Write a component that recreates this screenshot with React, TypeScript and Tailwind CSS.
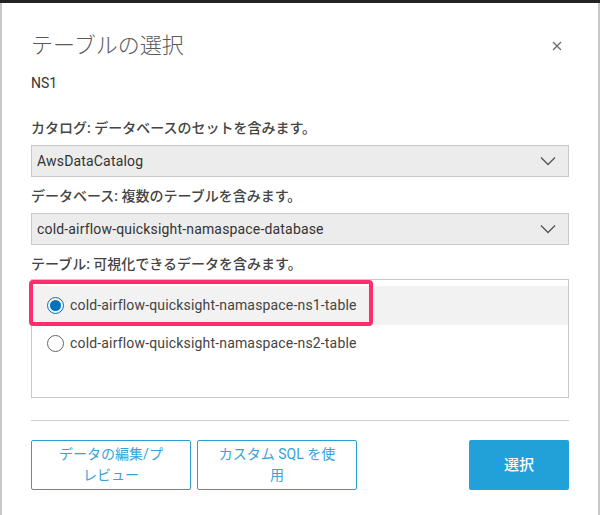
import React from "react";

const font = { fontFamily: '"Roboto", "Noto Sans CJK JP", sans-serif' };

function Chevron() {
  return (
    <svg width="16" height="10" viewBox="0 0 16 10" fill="none">
      <path d="M1 1.5 L8 8.5 L15 1.5" stroke="#555" strokeWidth="1.3" />
    </svg>
  );
}

function Select({ value }: { value: string }) {
  return (
    <div className="h-[32px] bg-[#ececec] border border-[#c8c8c8] flex items-center justify-between pl-[5px] pr-[12px] text-[14px] tracking-[0.17px] text-[#333]">
      <span>{value}</span>
      <Chevron />
    </div>
  );
}

export default function App() {
  return (
    <div className="w-[600px] h-[515px] bg-[#232323] pt-[3px] overflow-hidden" style={font}>
      <div className="h-[512px] bg-white border-l-2 border-r-2 border-[#c8c8c8] px-[29px] flex flex-col">
        <div className="flex items-center justify-between mt-[29px] h-[28px]">
          <h1 className="text-[22px] text-[#5a5a5a] font-light leading-[28px]">テーブルの選択</h1>
          <svg width="10" height="10" viewBox="0 0 10 10" className="mr-[7px]">
            <path d="M1 1 L9 9 M9 1 L1 9" stroke="#666" strokeWidth="1.2" />
          </svg>
        </div>
        <div className="mt-[13px] text-[14px] leading-[20px] text-[#333]">NS1</div>
        <div className="mt-[25px] text-[14px] leading-[20px] text-[#444] font-medium">カタログ: データベースのセットを含みます。</div>
        <div className="mt-[7px]">
          <Select value="AwsDataCatalog" />
        </div>
        <div className="mt-[9px] text-[14px] leading-[20px] text-[#444] font-medium">データベース: 複数のテーブルを含みます。</div>
        <div className="mt-[7px]">
          <Select value="cold-airflow-quicksight-namaspace-database" />
        </div>
        <div className="mt-[9px] text-[14px] leading-[20px] text-[#444] font-medium">テーブル: 可視化できるデータを含みます。</div>
        <div className="mt-[5px] h-[119px] border border-[#c8c8c8] relative pt-[6px]">
          <div className="h-[39px] bg-[#f2f2f2] flex items-center pl-[15px] text-[14px] tracking-[0.17px] text-[#444]">
            <span className="w-[17px] h-[17px] rounded-full border-[1.5px] border-[#0073bb] flex items-center justify-center mr-[6px]">
              <span className="w-[11px] h-[11px] rounded-full bg-[#0073bb]" />
            </span>
            cold-airflow-quicksight-namaspace-ns1-table
          </div>
          <div className="h-[37px] flex items-center pl-[15px] text-[14px] tracking-[0.17px] text-[#444]">
            <span className="w-[17px] h-[17px] rounded-full border border-[#666] mr-[6px]" />
            cold-airflow-quicksight-namaspace-ns2-table
          </div>
          <div className="absolute left-[-3px] top-[0px] w-[344px] h-[46px] border-[4px] border-[#ff2d6e] rounded-[4px]" />
        </div>
        <div className="mt-[22px] border-t border-[#cfcfcf]" />
        <div className="mt-[19px] flex items-stretch h-[50px]">
          <button className="w-[160px] border border-[#2a9fd6] rounded-[2px] text-[#35a3da] text-[14px] leading-[21px]">
            データの編集/プ<br />レビュー
          </button>
          <button className="ml-[6px] w-[160px] border border-[#2a9fd6] rounded-[2px] text-[#35a3da] text-[14px] leading-[21px]">
            カスタム SQL を使<br />用
          </button>
          <div className="flex-1" />
          <button className="w-[100px] bg-[#22a0d8] rounded-[2px] text-white text-[15px] font-medium">選択</button>
        </div>
      </div>
    </div>
  );
}
